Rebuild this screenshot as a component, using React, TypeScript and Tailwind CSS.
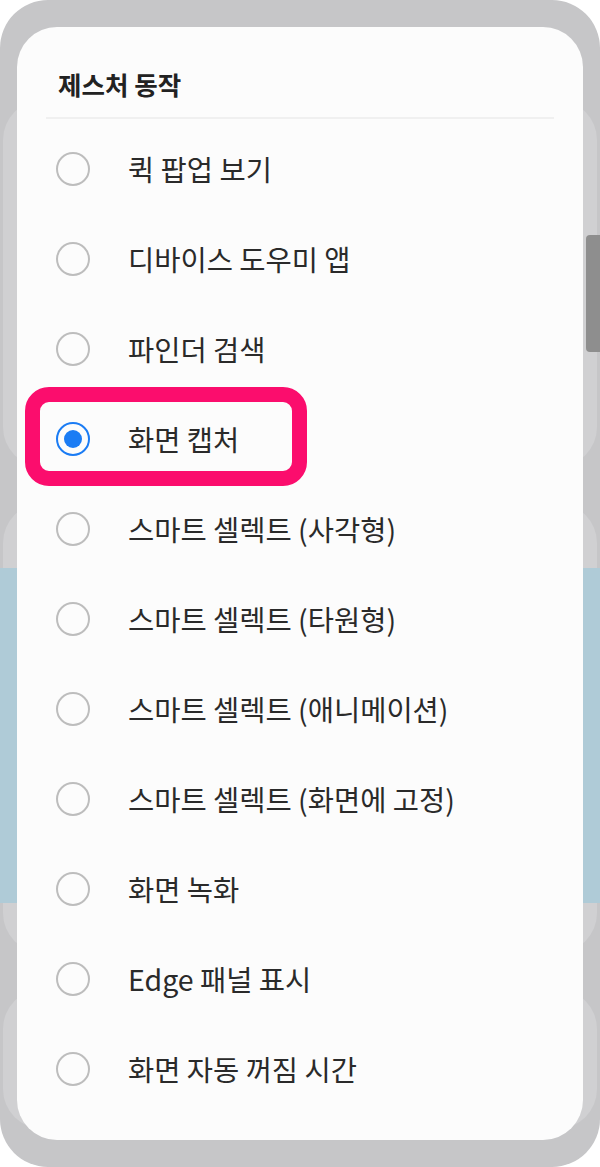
const options = [
  '퀵 팝업 보기',
  '디바이스 도우미 앱',
  '파인더 검색',
  '화면 캡처',
  '스마트 셀렉트 (사각형)',
  '스마트 셀렉트 (타원형)',
  '스마트 셀렉트 (애니메이션)',
  '스마트 셀렉트 (화면에 고정)',
  '화면 녹화',
  'Edge 패널 표시',
  '화면 자동 꺼짐 시간',
]

const selected = '화면 캡처'

function Radio({ checked }: { checked: boolean }) {
  if (checked) {
    return (
      <span className="flex h-[34px] w-[34px] shrink-0 items-center justify-center rounded-full border-2 border-[#1b7cf4]">
        <span className="h-[18px] w-[18px] rounded-full bg-[#1b7cf4]" />
      </span>
    )
  }
  return <span className="h-[34px] w-[34px] shrink-0 rounded-full border-2 border-[#bdbdbd]" />
}

export default function App() {
  return (
    <div className="h-[1167px] w-[600px] bg-white" style={{ fontFamily: '"Noto Sans CJK KR", "Noto Sans", sans-serif' }}>
      <div className="relative h-full w-full overflow-hidden rounded-[48px] bg-[#c6c6c8]">
        {/* screen behind the dialog */}
        <div className="flex flex-col gap-[36px] px-[3px] pt-[100px]">
          <div className="h-[367px] rounded-[40px] bg-[#d0d0d2]" />
          <div className="relative h-[450px] rounded-[40px] bg-[#d0d0d2]">
            <div className="absolute inset-x-[-3px] top-[65px] h-[335px] bg-[#afcbd7]" />
          </div>
          <div className="h-[140px] rounded-[40px] bg-[#d0d0d2]" />
        </div>

        {/* dialog */}
        <div className="absolute left-[17px] top-[27px] flex h-[1113px] w-[566px] flex-col rounded-[40px] bg-[#fcfcfc]">
          <div className="flex h-[90px] items-center pl-[41px] pt-[25px]">
            <h1 className="text-[25.5px] font-bold text-[#222222]">제스처 동작</h1>
          </div>
          <div className="mx-[29px] h-[2px] bg-[#f0f0f0]" />
          <ul className="mt-[5px] flex flex-col">
            {options.map(o => (
              <li key={o} className="flex h-[90px] items-center gap-[38px] pl-[39px]">
                <Radio checked={o === selected} />
                <span className="text-[28.5px] text-[#2a2a2a]">{o}</span>
              </li>
            ))}
          </ul>
        </div>

        {/* scrollbar */}
        <div className="absolute right-0 top-[235px] h-[117px] w-[14px] rounded-l-[4px] bg-[#8e8e8e]" />

        {/* highlight */}
        <div className="absolute left-[25px] top-[387px] h-[99px] w-[282px] rounded-[24px] border-[15px] border-[#fb0d6d]" />
      </div>
    </div>
  )
}
